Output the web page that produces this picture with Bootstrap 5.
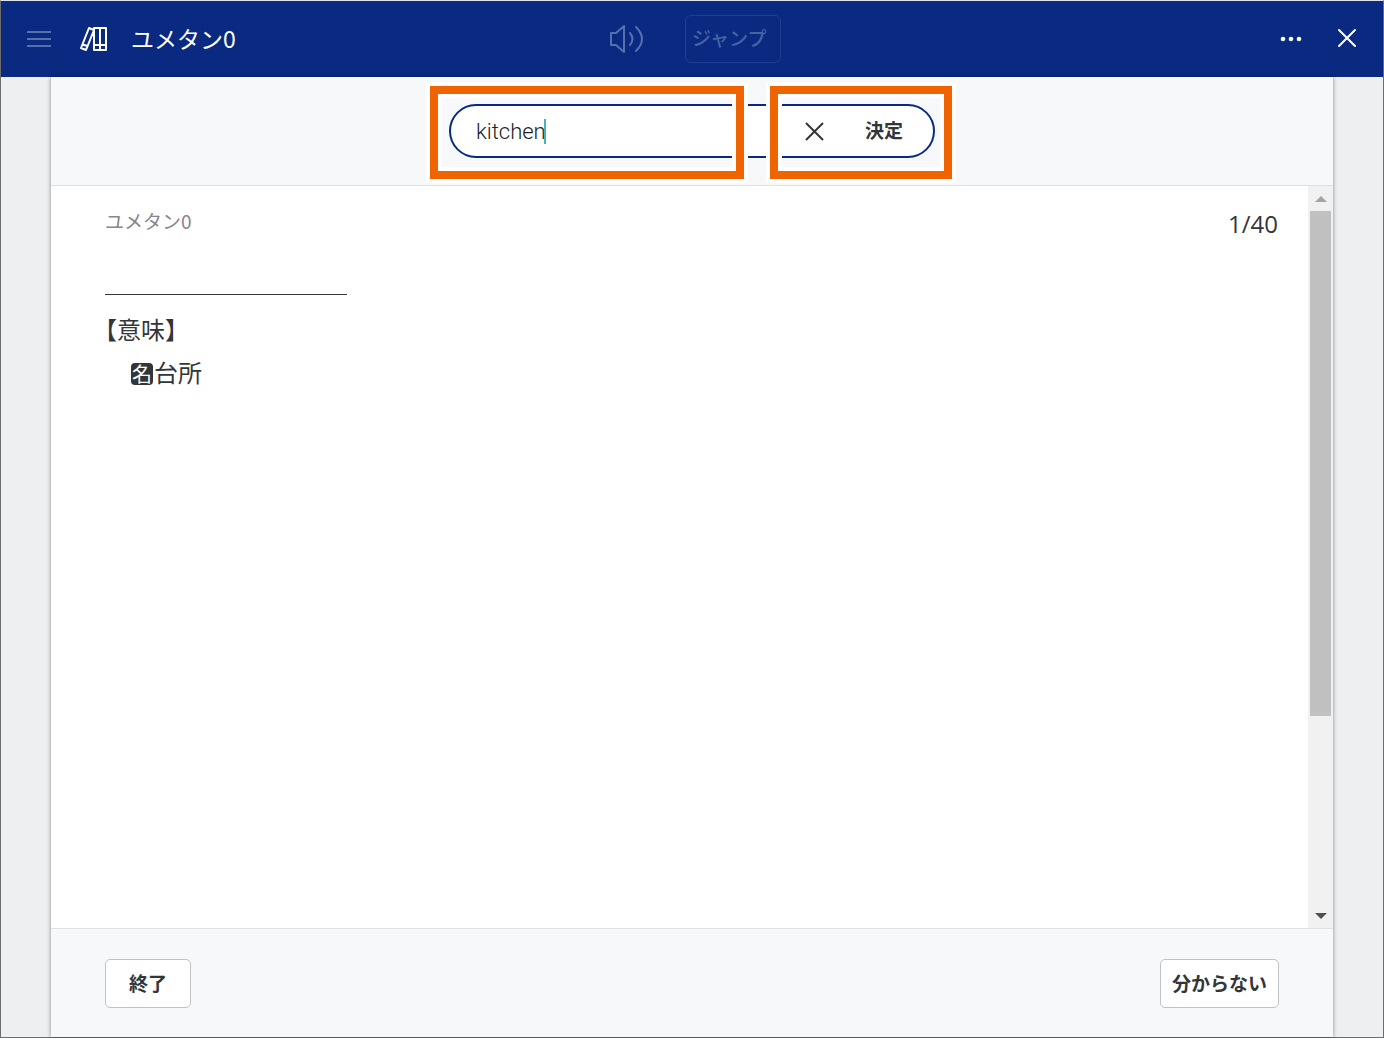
<!DOCTYPE html>
<html lang="ja">
<head>
<meta charset="utf-8">
<meta name="viewport" content="width=device-width, initial-scale=1">
<title>ユメタン0</title>
<link href="https://cdn.jsdelivr.net/npm/bootstrap@5.3.0/dist/css/bootstrap.min.css" rel="stylesheet">
<style>
  body { font-family: "Open Sans", "Noto Sans CJK JP", sans-serif; color: #323639; background: #edeff1; }
  .app-window { border: 1px solid #6c6c6e; border-top-color: #dde2ee; }
  .app-bar { background: #0a2a82; height: 76px; color: #fff; }
  .bar-side { flex: 1 1 0; }
  .bar-icon { color: inherit; background: none; border: 0; padding: 0; display: flex; }
  .bar-actions { gap: 30px; }
  .bar-tools { gap: 40px; }
  .app-title { font-family: "Noto Sans CJK JP", sans-serif; font-size: 23px; line-height: 36px; font-weight: 400; margin: 0 0 2px 22px; }
  .is-dim { color: #5471ae; }
  .jump-btn { width: 96px; height: 48px; border: 1px solid #1d3f90; border-radius: 6px; background: none; color: #4663a6; font: 500 19px/28px "Noto Sans CJK JP", sans-serif; padding: 0 6px 3px; text-align: left; white-space: nowrap; }
  .sheet { margin: 0 50px; background: #fff; box-shadow: 0 0 4px rgba(0,0,0,.45); }
  .answer-bar { background: #f7f8fa; border-bottom: 1px solid #e0e1e4; padding: 27px 0; }
  .answer-pill { width: 486px; height: 54px; border: 2px solid #0a2a82; border-radius: 27px; background: #fff; }
  .answer-field { position: relative; }
  .answer-input { width: 100%; border: 0; outline: 0; background: none; padding: 2px 0 0 25px; font: 300 22px/30px Roboto, sans-serif; color: #202326; }
  .text-caret { position: absolute; left: 93px; top: 4px; width: 2px; height: 25px; background: #3fb3c9; }
  .ok-btn { border: 0; background: none; padding: 0 30px 2px 38px; font: 700 19px/28px "Noto Sans CJK JP", sans-serif; color: #323639; }
  .focus-frame { position: absolute; top: -20px; height: 93px; border: 8px solid #f06400; box-shadow: 0 0 0 4px #fff, inset 0 0 0 4px #fff; pointer-events: none; }
  .frame-input { left: -21px; width: 314px; }
  .frame-submit { left: 319px; width: 182px; }
  .question { padding: 20px 30px 20px 54px; font: 400 24px/43px "Noto Sans CJK JP", sans-serif; }
  .source-name { font-size: 19px; line-height: 29px; color: #85878a; }
  .counter { font: 400 24px/36px "Open Sans", sans-serif; }
  .blank-line { width: 242px; border-bottom: 1px solid #323639; margin-bottom: 12px; }
  .sense-head { font-feature-settings: "halt"; }
  .pos-tag { display: inline-flex; align-items: center; justify-content: center; width: 22px; height: 22px; margin: 0 1px 0 2px; border-radius: 4px; background: #323639; color: #fff; font-size: 20px; line-height: 22px; }
  .scroll-track { width: 25px; background: #f1f1f1; padding: 0 2px; }
  .scroll-arrow { height: 25px; }
  .scroll-thumb { height: 73%; background: #c0c0c0; }
  .foot-bar { background: #f7f8fa; border-top: 1px solid #e0e1e4; padding: 30px 54px 29px; }
  .foot-btn { height: 49px; border: 1px solid #bfc1c4; border-radius: 5px; background: #fff; color: #323639; font: 700 19px/28px "Noto Sans CJK JP", sans-serif; padding: 0 11px 2px; }
  .foot-quit { padding: 0 23px 2px; }
</style>
<script src="https://cdn.jsdelivr.net/npm/bootstrap@5.3.0/dist/js/bootstrap.bundle.min.js"></script>
</head>
<body>
<div class="app-window d-flex flex-column vh-100">
  <header class="app-bar d-flex align-items-center flex-shrink-0">
    <div class="bar-side d-flex align-items-center ps-4">
      <button class="bar-icon is-dim" type="button" aria-label="メニュー">
        <svg width="28" height="24" viewBox="0 0 28 24" fill="none" stroke="currentColor" stroke-width="2"><path d="M2 5h24M2 12h24M2 19h24"/></svg>
      </button>
      <svg class="ms-4" width="32" height="28" viewBox="0 0 32 28" fill="none" stroke="#fff" stroke-width="2" stroke-linejoin="round" aria-hidden="true"><path d="M17 3h12v22H17zM23 3v22M17 20h12M12 3l5 2-8 20-5-2zM5 19l5 2"/></svg>
      <h1 class="app-title">ユメタン0</h1>
    </div>
    <div class="bar-tools d-flex align-items-center ps-1">
      <button class="bar-icon is-dim" type="button" aria-label="音声">
        <svg width="38" height="32" viewBox="0 0 38 32" fill="none" stroke="currentColor" stroke-width="2" stroke-linejoin="round" stroke-linecap="round"><path d="M4 10h5l8-7v26l-8-7H4zM23 10q5 6 0 12M29 4q12 12 0 24"/></svg>
      </button>
      <button class="jump-btn" type="button">ジャンプ</button>
    </div>
    <div class="bar-side bar-actions d-flex align-items-center justify-content-end pe-4">
      <button class="bar-icon" type="button" aria-label="その他">
        <svg width="28" height="24" viewBox="0 0 28 24" fill="currentColor"><circle cx="6" cy="12" r="2.300"/><circle cx="14" cy="12" r="2.300"/><circle cx="22" cy="12" r="2.300"/></svg>
      </button>
      <button class="bar-icon" type="button" aria-label="閉じる">
        <svg width="24" height="24" viewBox="0 0 24 24" fill="none" stroke="currentColor" stroke-width="2" stroke-linecap="round"><path d="M4 3l16 16M20 3L4 19"/></svg>
      </button>
    </div>
  </header>

  <main class="sheet d-flex flex-column flex-grow-1">
    <form class="answer-bar d-flex justify-content-center">
      <div class="answer-pill position-relative d-flex align-items-center">
        <div class="answer-field flex-grow-1">
          <input class="answer-input" type="text" value="kitchen" aria-label="解答">
          <span class="text-caret"></span>
        </div>
        <button class="bar-icon" type="reset" aria-label="クリア">
          <svg width="24" height="24" viewBox="0 0 24 24" fill="none" stroke="currentColor" stroke-width="2"><path d="M3 4l17 17M20 4L3 21"/></svg>
        </button>
        <button class="ok-btn" type="button">決定</button>
        <span class="focus-frame frame-input"></span>
        <span class="focus-frame frame-submit"></span>
      </div>
    </form>

    <div class="d-flex flex-grow-1">
      <section class="question flex-grow-1">
        <div class="d-flex justify-content-between">
          <div class="source-name">ユメタン0</div>
          <div class="counter">1/40</div>
        </div>
        <div class="blank-line pt-5 mt-1"></div>
        <div class="sense-head">【意味】</div>
        <div class="ps-4"><span class="pos-tag">名</span>台所</div>
      </section>
      <div class="scroll-track d-flex flex-column" aria-hidden="true">
        <div class="scroll-arrow d-flex align-items-center justify-content-center"><svg width="12" height="6" viewBox="0 0 12 6"><path d="M0 6L6 0l6 6z" fill="#a3a3a3"/></svg></div>
        <div class="flex-grow-1"><div class="scroll-thumb"></div></div>
        <div class="scroll-arrow d-flex align-items-center justify-content-center"><svg width="12" height="6" viewBox="0 0 12 6"><path d="M0 0l6 6 6-6z" fill="#505050"/></svg></div>
      </div>
    </div>

    <footer class="foot-bar d-flex justify-content-between">
      <button class="foot-btn foot-quit" type="button">終了</button>
      <button class="foot-btn" type="button">分からない</button>
    </footer>
  </main>
</div>
</body>
</html>
